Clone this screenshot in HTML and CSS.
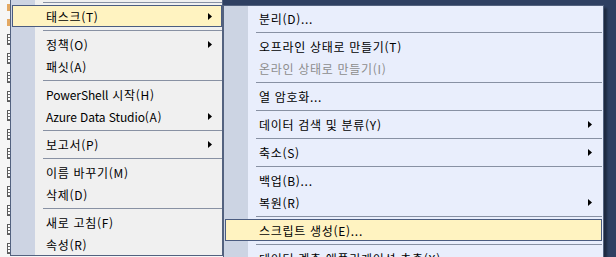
FILE: index.html
```html
<!DOCTYPE html>
<html lang="ko">

<head>
    <meta charset="UTF-8">
    <meta name="viewport" content="width=device-width, initial-scale=1.0">
    <title>컨텍스트 메뉴</title>
    <link rel="stylesheet" href="styles.css">
</head>

<body>
    <div class="tree-pane">
        <div class="tree-strip">
            <span class="node folder"></span>
            <span class="node folder"></span>
            <span class="node table"></span>
            <span class="node table"></span>
            <span class="node table"></span>
            <span class="node table"></span>
            <span class="node table"></span>
            <span class="node table"></span>
            <span class="node table"></span>
            <span class="node table"></span>
            <span class="node table"></span>
            <span class="node table"></span>
            <span class="node table"></span>
            <span class="node table"></span>
        </div>

        <ul class="menu main-menu">
            <li class="sep"></li>
            <li class="item open">
                <span>태스크(T)</span>
                <svg class="arrow" viewBox="0 0 4 7"><polygon points="0,0 4,3.5 0,7" /></svg>
            </li>
            <li class="sep"></li>
            <li class="item">
                <span>정책(O)</span>
                <svg class="arrow" viewBox="0 0 4 7"><polygon points="0,0 4,3.5 0,7" /></svg>
            </li>
            <li class="item"><span>패싯(A)</span></li>
            <li class="sep"></li>
            <li class="item"><span><span class="latin">PowerShell</span> 시작(H)</span></li>
            <li class="item">
                <span><span class="latin">Azure Data Studio</span>(A)</span>
                <svg class="arrow" viewBox="0 0 4 7"><polygon points="0,0 4,3.5 0,7" /></svg>
            </li>
            <li class="sep"></li>
            <li class="item">
                <span>보고서(P)</span>
                <svg class="arrow" viewBox="0 0 4 7"><polygon points="0,0 4,3.5 0,7" /></svg>
            </li>
            <li class="sep"></li>
            <li class="item"><span>이름 바꾸기(M)</span></li>
            <li class="item"><span>삭제(D)</span></li>
            <li class="sep"></li>
            <li class="item"><span>새로 고침(F)</span></li>
            <li class="item"><span>속성(R)</span></li>
        </ul>
    </div>

    <div class="doc-pane">
        <ul class="menu sub-menu">
            <li class="item"><span>분리(D)...</span></li>
            <li class="sep"></li>
            <li class="item"><span>오프라인 상태로 만들기(T)</span></li>
            <li class="item disabled"><span>온라인 상태로 만들기(I)</span></li>
            <li class="sep"></li>
            <li class="item"><span>열 암호화...</span></li>
            <li class="sep"></li>
            <li class="item">
                <span>데이터 검색 및 분류(Y)</span>
                <svg class="arrow" viewBox="0 0 4 7"><polygon points="0,0 4,3.5 0,7" /></svg>
            </li>
            <li class="sep"></li>
            <li class="item">
                <span>축소(S)</span>
                <svg class="arrow" viewBox="0 0 4 7"><polygon points="0,0 4,3.5 0,7" /></svg>
            </li>
            <li class="sep"></li>
            <li class="item"><span>백업(B)...</span></li>
            <li class="item">
                <span>복원(R)</span>
                <svg class="arrow" viewBox="0 0 4 7"><polygon points="0,0 4,3.5 0,7" /></svg>
            </li>
            <li class="sep"></li>
            <li class="item open"><span>스크립트 생성(E)...</span></li>
            <li class="sep"></li>
            <li class="item">
                <span>데이터 계층 애플리케이션 추출(X)...</span>
            </li>
        </ul>
    </div>
</body>

</html>
```

FILE: styles.css
```css
html,
body {
    width: 616px;
    height: 257px;
}

body {
    margin: 0;
    overflow: hidden;
    display: flex;
    align-items: flex-start;
    background: #2f4062;
    font-family: "Noto Sans CJK KR", "Noto Sans", sans-serif;
    font-size: 12px;
    color: #000;
}

/* 왼쪽 개체 탐색기 (메뉴 뒤에 조금 보임) */
.tree-pane {
    width: 223px;
    height: 257px;
    display: flex;
    align-items: flex-start;
    background: #f6f6f6;
}

.tree-strip {
    width: 10px;
    flex: none;
    display: flex;
    flex-direction: column;
    align-items: flex-end;
    gap: 8px;
    padding-top: 4px;
}

.node {
    width: 3px;
    height: 9px;
    box-sizing: border-box;
}

.node.folder {
    height: 7px;
    background: #e3a862;
}

.node.table {
    height: 11px;
    border: 1px solid #5c5c5c;
    border-right: none;
    background: repeating-linear-gradient(#fff 0 2px, #6a6a6a 2px 3px);
}

/* 공통 메뉴 */
.menu {
    list-style: none;
    margin: 0;
    padding: 1px 0;
    border: 1px solid #53627f;
}

.main-menu {
    width: 211px;
    margin-top: -3px;
    padding-bottom: 0;
    background: linear-gradient(to right, #cdd4e3 0 24px, #f0f0f0 24px);
}

.sub-menu {
    width: 379px;
    margin-top: 5px;
    background: linear-gradient(to right, #ccd4e3 0 24px, #e9eefc 24px);
    box-shadow: 3px 3px 2px rgba(0, 0, 0, 0.35);
}

.item {
    height: 22px;
    box-sizing: border-box;
    margin: 0 1px;
    padding: 0 9px 0 33px;
    border: 1px solid transparent;
    display: flex;
    align-items: center;
    justify-content: space-between;
    white-space: nowrap;
    letter-spacing: 0.7px;
}

/* 한글은 맑은 고딕처럼 조금 넓게, 영문은 그대로 */
.latin {
    letter-spacing: -0.1px;
}

.main-menu .item {
    margin-right: 0;
}

.item.open {
    background: #fff3c1;
    border-color: #4b5c80;
}

.item.disabled {
    color: #8d8d8d;
}

.arrow {
    width: 4px;
    height: 7px;
    flex: none;
    fill: #000;
}

.sep {
    height: 1px;
    margin: 3px 1px 2px 32px;
    background: #8891a3;
}

.main-menu .sep {
    margin-right: 0;
}
```
